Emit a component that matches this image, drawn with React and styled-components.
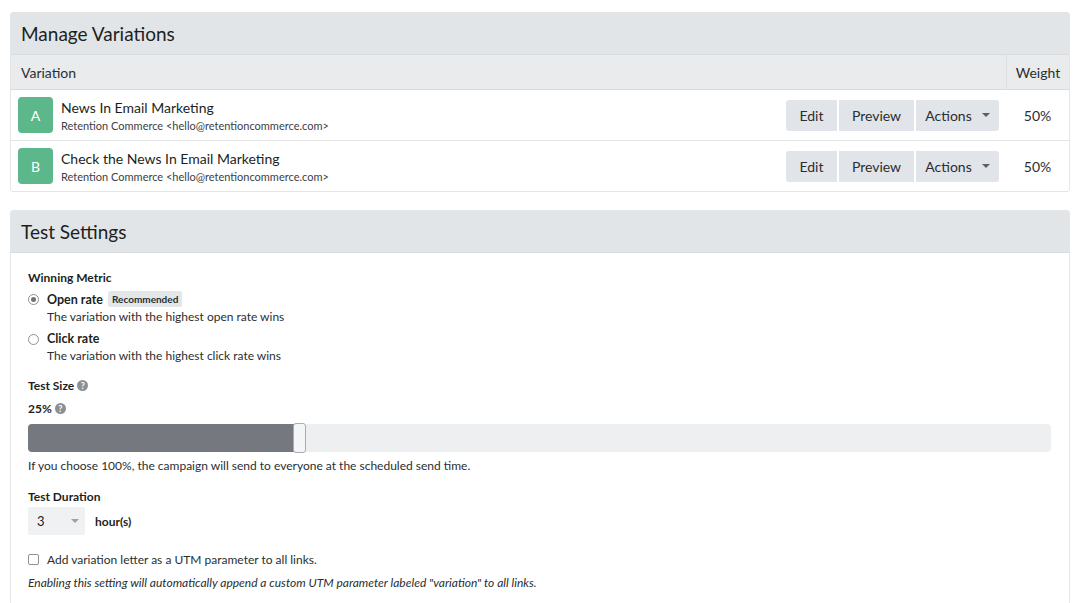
import React from 'react';
import styled, { createGlobalStyle } from 'styled-components';

const GlobalStyle = createGlobalStyle`
  body {
    margin: 0;
    background: #ffffff;
    font-family: Lato, "Liberation Sans", sans-serif;
    color: #1f2326;
  }
`;

const Page = styled.div`
  padding: 12px 10px 0;
  display: flex;
  flex-direction: column;
  gap: 18px;
  height: 603px;
  box-sizing: border-box;
  overflow: hidden;
`;

const Panel = styled.div`
  border: 1px solid #e3e5e7;
  border-radius: 3px;
  background: #fff;
`;

const PanelHeader = styled.div`
  height: 41px;
  background: #e2e5e8;
  display: flex;
  align-items: center;
  padding: 0 10px;
  font-size: 19px;
  color: #1c1f22;
  border-bottom: 1px solid #d9dcdf;
`;

const Table = styled.div`
  display: grid;
  grid-template-columns: 1fr 63px;
`;

const HeadCell = styled.div`
  height: 34px;
  background: #e9ebed;
  display: flex;
  align-items: center;
  font-size: 14px;
  color: #2a2e31;
  padding: 0 ${p => (p.$right ? '0' : '10px')};
  justify-content: ${p => (p.$right ? 'center' : 'flex-start')};
  border-left: ${p => (p.$right ? '1px solid #dcdfe2' : 'none')};
  border-bottom: 1px solid #d9dcdf;
`;

const RowCell = styled.div`
  height: 50px;
  display: flex;
  align-items: center;
  border-bottom: ${p => (p.$last ? 'none' : '1px solid #e3e5e7')};
  padding: ${p => (p.$right ? '0' : '0 7px')};
  justify-content: ${p => (p.$right ? 'center' : 'flex-start')};
  font-size: 14px;
  color: #2a2e31;
`;

const Badge = styled.div`
  width: 35px;
  height: 36px;
  border-radius: 4px;
  background: #5cb88b;
  color: #fff;
  font-size: 14px;
  display: flex;
  align-items: center;
  justify-content: center;
  flex-shrink: 0;
`;

const Info = styled.div`
  margin-left: 8px;
  flex: 1;
  display: flex;
  flex-direction: column;
  gap: 3px;
`;

const Title = styled.div`
  font-size: 14px;
  color: #1c1f22;
`;

const Sub = styled.div`
  font-size: 11px;
  color: #3c4145;
`;

const ButtonGroup = styled.div`
  display: flex;
  gap: 2px;
`;

const Btn = styled.button`
  height: 31px;
  border: none;
  background: #e1e4e8;
  font-family: inherit;
  font-size: 14px;
  color: #2a2e31;
  padding: 0;
  width: ${p => p.$w}px;
  display: flex;
  align-items: center;
  justify-content: center;
  gap: 10px;
  border-radius: ${p => p.$radius || '0'};
`;

const Caret = styled.span`
  width: 0;
  height: 0;
  border-left: 4px solid transparent;
  border-right: 4px solid transparent;
  border-top: 4px solid #5a5f64;
`;

const Body = styled.div`
  padding: 17px 17px 14px;
  display: flex;
  flex-direction: column;
`;

const Label = styled.div`
  font-size: 12px;
  font-weight: 700;
  color: #1c1f22;
  display: flex;
  align-items: center;
  gap: 3px;
  margin-top: ${p => p.$mt || 0}px;
`;

const RadioRow = styled.div`
  display: flex;
  gap: 8px;
  margin-top: ${p => p.$mt || 0}px;
`;

const Radio = styled.span`
  width: 9px;
  height: 9px;
  border-radius: 50%;
  border: 1px solid #8d9196;
  background: #fff;
  margin-top: 3px;
  display: flex;
  align-items: center;
  justify-content: center;
  flex-shrink: 0;
  &::after {
    content: '';
    width: 5px;
    height: 5px;
    border-radius: 50%;
    background: ${p => (p.$checked ? '#6e7378' : 'transparent')};
  }
`;

const RadioText = styled.div`
  display: flex;
  flex-direction: column;
  gap: 2px;
`;

const RadioTitle = styled.div`
  font-size: 12.5px;
  font-weight: 700;
  display: flex;
  align-items: center;
  gap: 5px;
  color: #1c1f22;
`;

const Tag = styled.span`
  background: #e4e7ea;
  font-size: 10px;
  font-weight: 700;
  padding: 2px 4px;
  border-radius: 2px;
  color: #2a2e31;
`;

const Desc = styled.div`
  font-size: 12px;
  color: #2a2e31;
  margin-top: ${p => p.$mt || 0}px;
  font-style: ${p => (p.$italic ? 'italic' : 'normal')};
`;

const Help = styled.span`
  width: 11px;
  height: 11px;
  border-radius: 50%;
  background: #8c9095;
  color: #fff;
  font-size: 9px;
  font-weight: 700;
  display: inline-flex;
  align-items: center;
  justify-content: center;
`;

const Slider = styled.div`
  margin-top: 8px;
  height: 28px;
  border-radius: 4px;
  background: #eeeff1;
  position: relative;
  margin-right: 1px;
`;

const SliderFill = styled.div`
  height: 100%;
  background: #75787e;
  border-radius: 4px 0 0 4px;
`;

const Thumb = styled.div`
  position: absolute;
  top: -1px;
  width: 13px;
  height: 30px;
  border: 1px solid #a8acb0;
  border-radius: 3px;
  background: #f4f5f6;
  box-sizing: border-box;
`;

const DurationRow = styled.div`
  display: flex;
  align-items: center;
  gap: 10px;
  margin-top: 3px;
`;

const Select = styled.div`
  width: 57px;
  height: 28px;
  background: #f0f1f3;
  border-radius: 2px;
  display: flex;
  align-items: center;
  justify-content: space-between;
  padding: 0 6px 0 9px;
  box-sizing: border-box;
  font-size: 13px;
  color: #1c1f22;
`;

const SmallCaret = styled(Caret)`
  border-top-color: #9ca0a5;
`;

const CheckRow = styled.div`
  display: flex;
  align-items: center;
  gap: 8px;
  margin-top: 17px;
  font-size: 12px;
  color: #2a2e31;
`;

const Checkbox = styled.span`
  width: 9px;
  height: 9px;
  border: 1px solid #8d9196;
  border-radius: 2px;
  background: #fff;
`;

const variations = [
  { letter: 'A', title: 'News In Email Marketing', weight: '50%' },
  { letter: 'B', title: 'Check the News In Email Marketing', weight: '50%' },
];

export default function App() {
  const size = 25;
  return (
    <>
      <GlobalStyle />
      <Page>
        <Panel>
          <PanelHeader>Manage Variations</PanelHeader>
          <Table>
            <HeadCell>Variation</HeadCell>
            <HeadCell $right>Weight</HeadCell>
            {variations.map((v, i) => (
              <React.Fragment key={v.letter}>
                <RowCell $last={i === variations.length - 1}>
                  <Badge>{v.letter}</Badge>
                  <Info>
                    <Title>{v.title}</Title>
                    <Sub>Retention Commerce &lt;hello@retentioncommerce.com&gt;</Sub>
                  </Info>
                  <ButtonGroup>
                    <Btn $w={51} $radius="3px 0 0 3px">Edit</Btn>
                    <Btn $w={75}>Preview</Btn>
                    <Btn $w={83} $radius="0 3px 3px 0">Actions <Caret /></Btn>
                  </ButtonGroup>
                </RowCell>
                <RowCell $right $last={i === variations.length - 1}>{v.weight}</RowCell>
              </React.Fragment>
            ))}
          </Table>
        </Panel>

        <Panel>
          <PanelHeader>Test Settings</PanelHeader>
          <Body>
            <Label>Winning Metric</Label>
            <RadioRow $mt={6}>
              <Radio $checked />
              <RadioText>
                <RadioTitle>Open rate <Tag>Recommended</Tag></RadioTitle>
                <Desc>The variation with the highest open rate wins</Desc>
              </RadioText>
            </RadioRow>
            <RadioRow $mt={7}>
              <Radio />
              <RadioText>
                <RadioTitle>Click rate</RadioTitle>
                <Desc>The variation with the highest click rate wins</Desc>
              </RadioText>
            </RadioRow>
            <Label $mt={15}>Test Size <Help>?</Help></Label>
            <Label $mt={8}>{size}% <Help>?</Help></Label>
            <Slider>
              <SliderFill style={{ width: '26.6%' }} />
              <Thumb style={{ left: 'calc(26.6% - 7px)' }} />
            </Slider>
            <Desc $mt={6}>If you choose 100%, the campaign will send to everyone at the scheduled send time.</Desc>
            <Label $mt={16}>Test Duration</Label>
            <DurationRow>
              <Select>3 <SmallCaret /></Select>
              <Label>hour(s)</Label>
            </DurationRow>
            <CheckRow>
              <Checkbox />
              Add variation letter as a UTM parameter to all links.
            </CheckRow>
            <Desc $mt={8} $italic>Enabling this setting will automatically append a custom UTM parameter labeled "variation" to all links.</Desc>
          </Body>
        </Panel>
      </Page>
    </>
  );
}
